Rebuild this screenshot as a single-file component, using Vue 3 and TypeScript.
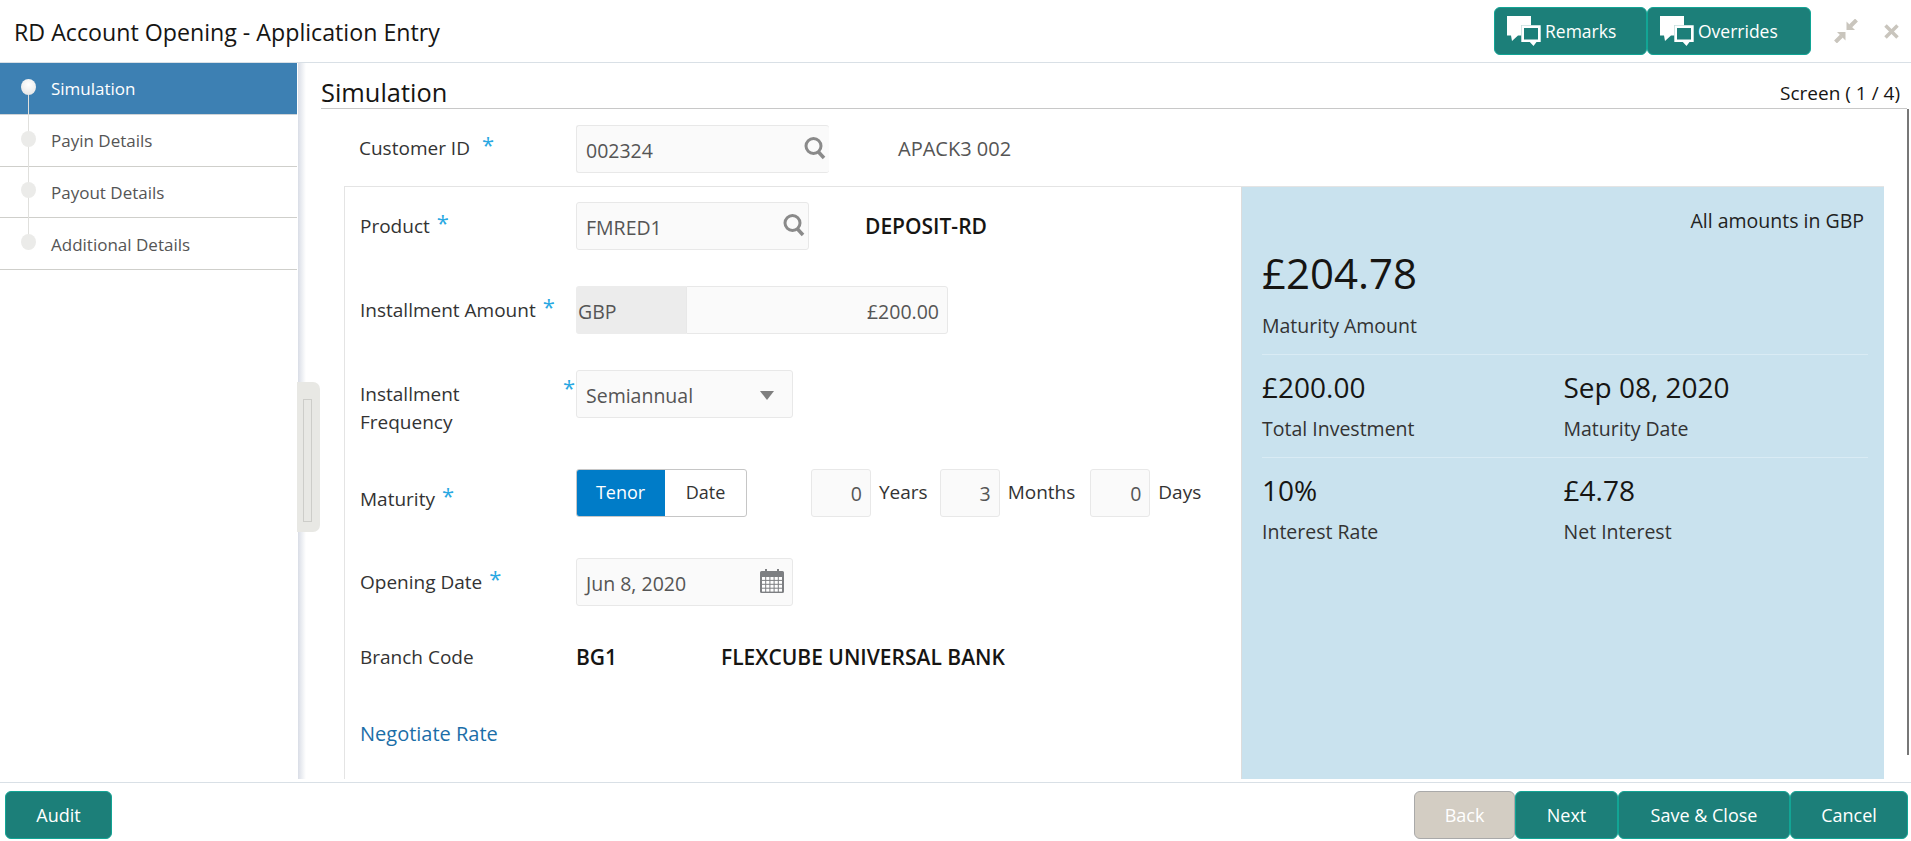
<script setup lang="ts">
const steps = [
  { name: 'Simulation', active: true },
  { name: 'Payin Details', active: false },
  { name: 'Payout Details', active: false },
  { name: 'Additional Details', active: false },
];

const tenor = [
  { value: 0, unit: 'Years' },
  { value: 3, unit: 'Months' },
  { value: 0, unit: 'Days' },
];

const stats = [
  [
    { value: '£200.00', label: 'Total Investment' },
    { value: 'Sep 08, 2020', label: 'Maturity Date' },
  ],
  [
    { value: '10%', label: 'Interest Rate' },
    { value: '£4.78', label: 'Net Interest' },
  ],
];

const calendarCells: { x: number; y: number }[] = [];
for (let row = 0; row < 4; row++) {
  for (let col = 0; col < 5; col++) {
    calendarCells.push({ x: 2 + col * 4.2, y: 8 + row * 3.9 });
  }
}
</script>

<template>
  <div class="app">
    <header class="top">
      <h1 class="title">RD Account Opening - Application Entry</h1>
      <button v-for="name in ['Remarks', 'Overrides']" :key="name" class="btn top-btn" :class="name.toLowerCase()">
        <svg class="chat" viewBox="0 0 35 30" width="35" height="30">
          <path d="M1 0h24v9.300H15.300V19.500H12L6 25l-1-5.500H1z" fill="#fff" />
          <path d="M15.300 9.300h19.400V26h-4.200l-3 4-3.700-4h-8.500z" fill="#fff" />
          <rect x="18" y="12" width="14" height="11.500" fill="#1c7f79" />
        </svg>
        <span>{{ name }}</span>
      </button>
      <div class="win">
        <svg viewBox="0 0 24 24" width="24" height="24">
          <path d="M12.500 11V2.500l8.500 8.500z" fill="#c9c5bd" />
          <path d="M16.500 7l6-6M7.500 17l-6 6" stroke="#c9c5bd" stroke-width="4" fill="none" />
          <path d="M11.500 13v8.500L3 13z" fill="#c9c5bd" />
        </svg>
        <svg class="close" viewBox="0 0 15 15" width="15" height="15">
          <path d="M1.500 1.500l12 12M13.500 1.500l-12 12" stroke="#c9c5bd" stroke-width="3.500" fill="none" />
        </svg>
      </div>
    </header>

    <div class="middle">
      <aside class="sidebar">
        <div v-for="(step, i) in steps" :key="step.name" class="step" :class="{ active: step.active }">
          <span class="rail" :class="{ first: i === 0, last: i === steps.length - 1 }"></span>
          <span class="dot"></span>
          <span class="step-name">{{ step.name }}</span>
        </div>
      </aside>

      <div class="handle"><span class="grip"></span></div>

      <main class="main">
        <div class="main-head">
          <h2 class="main-title">Simulation</h2>
          <span class="screen">Screen ( 1 / 4)</span>
        </div>

        <div class="scroller">
          <div class="content">
            <div class="customer">
              <label class="label customer-label">Customer ID<span class="req">*</span></label>
              <div class="input customer-input">
                <span class="val">002324</span>
                <svg class="search" viewBox="0 0 22 24" width="22" height="24">
                  <circle cx="9.500" cy="10" r="7.500" stroke="#8a8a8a" stroke-width="3" fill="none" />
                  <path d="M14.500 16l5.500 6" stroke="#8a8a8a" stroke-width="3.500" fill="none" />
                </svg>
              </div>
              <span class="customer-name">APACK3 002</span>
            </div>

            <section class="card">
              <div class="form">
                <div class="row row-product">
                  <label class="label">Product<span class="req">*</span></label>
                  <div class="input product-input">
                    <span class="val">FMRED1</span>
                    <svg class="search" viewBox="0 0 22 24" width="22" height="24">
                      <circle cx="9.500" cy="10" r="7.500" stroke="#8a8a8a" stroke-width="3" fill="none" />
                      <path d="M14.500 16l5.500 6" stroke="#8a8a8a" stroke-width="3.500" fill="none" />
                    </svg>
                  </div>
                  <strong class="product-name">DEPOSIT-RD</strong>
                </div>

                <div class="row row-amount">
                  <label class="label">Installment Amount<span class="req">*</span></label>
                  <div class="currency">GBP</div>
                  <div class="input amount-input"><span class="val">£200.00</span></div>
                </div>

                <div class="row row-frequency">
                  <label class="label freq-label"><span class="freq-text">Installment Frequency</span><span class="req">*</span></label>
                  <div class="input select-input">
                    <span class="val">Semiannual</span>
                    <svg class="caret" viewBox="0 0 14 9" width="14" height="9"><path d="M0 0h14L7 9z" fill="#7f7f7f" /></svg>
                  </div>
                </div>

                <div class="row row-maturity">
                  <label class="label maturity-label">Maturity<span class="req">*</span></label>
                  <div class="toggle">
                    <span class="toggle-on">Tenor</span>
                    <span class="toggle-off">Date</span>
                  </div>
                  <div class="tenor">
                    <template v-for="t in tenor" :key="t.unit">
                      <div class="input tenor-input"><span class="val">{{ t.value }}</span></div>
                      <span class="unit">{{ t.unit }}</span>
                    </template>
                  </div>
                </div>

                <div class="row row-opening">
                  <label class="label">Opening Date<span class="req">*</span></label>
                  <div class="input select-input">
                    <span class="val">Jun 8, 2020</span>
                    <svg class="calendar" viewBox="0 0 24 24" width="24" height="24">
                      <path d="M1.500 2H5V0h2v2h10V0h2v2h3.500q1.500 0 1.500 1.500V22.500q0 1.500-1.500 1.500h-21Q0 24 0 22.500V3.500Q0 2 1.500 2z" fill="#7d7f82" />
                      <rect v-for="(c, i) in calendarCells" :key="i" :x="c.x" :y="c.y" width="3.200" height="2.900" fill="#fff" />
                    </svg>
                  </div>
                </div>

                <div class="row row-branch">
                  <label class="label">Branch Code</label>
                  <strong class="branch-code">BG1</strong>
                  <strong class="branch-name">FLEXCUBE UNIVERSAL BANK</strong>
                </div>

                <a class="negotiate">Negotiate Rate</a>
              </div>

              <div class="summary">
                <div class="note">All amounts in GBP</div>
                <div class="hero">£204.78</div>
                <div class="stat-label hero-label">Maturity Amount</div>
                <div v-for="(group, i) in stats" :key="i" class="stat-row">
                  <div v-for="s in group" :key="s.label">
                    <div class="stat-value">{{ s.value }}</div>
                    <div class="stat-label">{{ s.label }}</div>
                  </div>
                </div>
              </div>
            </section>
          </div>
          <div class="track"></div>
        </div>
      </main>
    </div>

    <footer class="bottom">
      <button class="btn audit">Audit</button>
      <div class="nav-btns">
        <button class="btn back">Back</button>
        <button class="btn next">Next</button>
        <button class="btn save">Save &amp; Close</button>
        <button class="btn cancel">Cancel</button>
      </div>
    </footer>
  </div>
</template>

<style>
html, body { margin: 0; height: 100%; overflow: hidden; background: #fff; }
</style>

<style scoped>
.app {
  height: 841px;
  display: flex;
  flex-direction: column;
  font-family: "Open Sans", "Noto Sans", sans-serif;
  font-size: 19px;
  color: #333;
}

/* top bar */
.top {
  height: 55px;
  flex: none;
  display: flex;
  align-items: flex-start;
  padding: 7px 0 0 14px;
  border-bottom: 1px solid #d9e0e6;
}
.title {
  flex: 1;
  margin: 5px 0 0;
  font-size: 23.200px;
  line-height: 40px;
  font-weight: 400;
  color: #161513;
}
.btn {
  height: 48px;
  padding: 0;
  border: 1px solid #12a595;
  border-radius: 6px;
  background: #1c7f79;
  color: #fff;
  font: inherit;
  font-size: 18px;
}
.top-btn {
  display: flex;
  align-items: center;
  padding-left: 11px;
  box-sizing: border-box;
  font-size: 17.500px;
}
.top-btn span { margin-left: 4px; margin-top: 0; }
.remarks { width: 153px; }
.overrides { width: 164px; }
.chat { flex: none; }
.win {
  width: 100px;
  display: flex;
  padding: 12px 0 0 23px;
  box-sizing: border-box;
}
.close { margin: 5px 0 0 26px; }

/* middle */
.middle {
  flex: 1;
  display: flex;
  min-height: 0;
  position: relative;
}
.sidebar {
  width: 297px;
  flex: none;
}
.step {
  height: 51.750px;
  display: flex;
  align-items: center;
  border-bottom: 1px solid #cfcfcb;
  box-sizing: border-box;
  padding-left: 21px;
  position: relative;
  color: #555;
  font-size: 17px;
}
.step.active { background: #3d80b3; color: #fff; border-bottom-color: #cfd3d6; }
.rail {
  position: absolute;
  left: 28px;
  top: -2px;
  bottom: -2px;
  width: 1px;
  background: #e0e0dd;
}
.rail.first { top: 30px; }
.rail.last { bottom: 26px; }
.dot {
  width: 15px;
  height: 16px;
  border-radius: 50%;
  background: #ebebe9;
  position: relative;
  margin-top: -3px;
}
.active .dot { background: radial-gradient(circle at 50% 35%, #fff, #e6e6e6 85%); }
.step-name { margin-left: 15px; margin-top: 1px; }

.handle {
  position: absolute;
  left: 297px;
  top: 319px;
  width: 23px;
  height: 150px;
  background: #e8e8e4;
  border-radius: 0 7px 7px 0;
  box-sizing: border-box;
  padding: 17px 0 0 6px;
}
.grip {
  display: block;
  width: 9px;
  height: 123px;
  border: 1px solid #cdcdc9;
  box-sizing: border-box;
}

.main {
  flex: 1;
  min-width: 0;
  margin-left: 1px;
  margin-bottom: 3px;
  padding-left: 23px;
  background: linear-gradient(to right, #d9dde6, #f6f7f9 6px, #fff 8px);
  display: flex;
  flex-direction: column;
}
.main-head {
  height: 45px;
  flex: none;
  margin-right: 4px;
  display: flex;
  align-items: flex-end;
  justify-content: space-between;
  border-bottom: 1px solid #c8c8c8;
}
.main-title {
  margin: 0 0 -2px;
  font-size: 25.400px;
  line-height: 36px;
  font-weight: 400;
  color: #161513;
}
.screen {
  padding-right: 7px;
  font-size: 19px;
  line-height: 30px;
  color: #161513;
}
.scroller {
  flex: 1;
  display: flex;
  min-height: 0;
}
.content {
  flex: 1;
  min-width: 0;
  display: flex;
  flex-direction: column;
}
.track {
  width: 1.500px;
  height: 646px;
  margin: 0 2.500px 0 0;
  background: #777;
}

/* form bits */
.label {
  width: 215px;
  flex: none;
  display: flex;
  padding-top: 10px;
  line-height: 28px;
  color: #333;
  box-sizing: border-box;
}
.req {
  color: #29a8e2;
  font-size: 22px;
  line-height: 21px;
  margin-left: 7px;
  height: 21px;
}
.input {
  height: 48px;
  flex: none;
  display: flex;
  align-items: center;
  padding-left: 9px;
  background: #fafafa;
  border: 1px solid #e8e8e8;
  border-radius: 3px;
  box-sizing: border-box;
  color: #555;
  font-size: 19.500px;
}
.val { flex: 1; margin-top: 3px; }
.search { flex: none; margin: -3px 3px 0 0; align-self: center; }

.customer {
  display: flex;
  align-items: flex-start;
  padding: 16px 0 0 38px;
}
.customer-label { width: 217px; padding-top: 9px; }
.customer-label .req { margin-left: 12px; }
.customer-input { width: 253px; border-right: none; }
.customer-name { margin: 10px 0 0 69px; line-height: 28px; color: #555; font-size: 20px; }

.card {
  flex: 1;
  min-height: 0;
  display: flex;
  margin: 13px 23px 0 23px;
  border-left: 1px solid #e4e4e4;
  border-top: 1px solid #e4e4e4;
}
.form {
  flex: 1;
  min-width: 0;
  padding: 15px 0 0 15px;
}
.row {
  display: flex;
  align-items: flex-start;
  height: 48px;
}
.row .label { width: 216px; }
.row-amount, .row-frequency { margin-top: 36px; }
.row-maturity { margin-top: 51px; }
.row-opening { margin-top: 41px; }
.row-branch { margin-top: 27px; }
.product-input { width: 233px; }
.product-name {
  margin: 10px 0 0 56px;
  line-height: 28px;
  font-size: 21px;
  font-weight: 600;
  color: #161513;
}
.currency {
  width: 110px;
  height: 48px;
  flex: none;
  display: flex;
  align-items: center;
  padding: 3px 0 0 2px;
  box-sizing: border-box;
  background: #ececec;
  border-radius: 3px 0 0 3px;
  color: #555;
  font-size: 19.500px;
}
.amount-input { width: 262px; border-radius: 0 3px 3px 0; padding-right: 8px; text-align: right; }
.freq-text { width: 175px; }
.freq-label .req { margin-left: 28px; margin-top: -3px; }
.select-input { width: 217px; }
.caret { flex: none; margin: 3px 18px 0 0; }
.calendar { flex: none; margin: -3px 8px 0 0; }
.row .maturity-label { padding-top: 16px; }
.toggle {
  width: 171px;
  height: 48px;
  flex: none;
  display: flex;
  box-sizing: border-box;
  border-radius: 3px;
  overflow: hidden;
  border: 1px solid #c6c6c6;
  line-height: 44px;
  text-align: center;
  font-size: 18px;
}
.toggle-on {
  width: 89px;
  margin: -1px 0 -1px -1px;
  padding-top: 1px;
  background: #007cc8;
  color: #fff;
  font-weight: 500;
}
.toggle-off { flex: 1; color: #333; }
.tenor {
  display: flex;
  margin-left: 64px;
}
.tenor-input { width: 60px; padding: 0 8px 0 0; text-align: right; }
.tenor-input .val { margin-top: 1px; }
.unit { margin: 9px 12px 0 8px; line-height: 28px; color: #333; }
.unit:nth-child(4) { margin-right: 15px; }
.branch-code, .branch-name {
  margin-top: 10px;
  line-height: 28px;
  font-size: 21px;
  font-weight: 600;
  color: #161513;
}
.branch-code { width: 145px; }
.negotiate {
  display: block;
  margin-top: 39px;
  line-height: 28px;
  font-size: 20px;
  color: #1b6ea8;
  cursor: pointer;
}

/* blue panel */
.summary {
  width: 643px;
  flex: none;
  box-sizing: border-box;
  padding: 16px 16px 0 20px;
  background: #c9e2ee;
  border-left: 1px solid #dcdcdc;
  color: #161513;
}
.note {
  padding-right: 4px;
  text-align: right;
  line-height: 36px;
  font-size: 19.500px;
  color: #222;
}
.hero {
  margin-top: 3.500px;
  font-size: 42px;
  line-height: 60px;
  color: #161513;
}
.stat-label {
  font-size: 19.500px;
  line-height: 28px;
  color: #333;
}
.hero-label { margin: 9.500px 0 13.500px; }
.stat-row {
  display: grid;
  grid-template-columns: 301.500px 1fr;
  height: 103px;
  border-top: 1px solid #d9ebf4;
  padding-top: 14px;
  box-sizing: border-box;
}
.stat-value {
  font-size: 28px;
  line-height: 36px;
  margin-bottom: 10px;
  color: #161513;
}

/* footer */
.bottom {
  height: 50px;
  flex: none;
  border-top: 1px solid #d9e0e6;
  display: flex;
  justify-content: space-between;
  padding: 8px 3px 0 5px;
}
.nav-btns { display: flex; }
.audit { width: 107px; }
.back { width: 101px; background: #d3cdc3; border-color: #a9a9a9; }
.next { width: 103px; }
.save { width: 172px; }
.cancel { width: 118px; }
</style>
